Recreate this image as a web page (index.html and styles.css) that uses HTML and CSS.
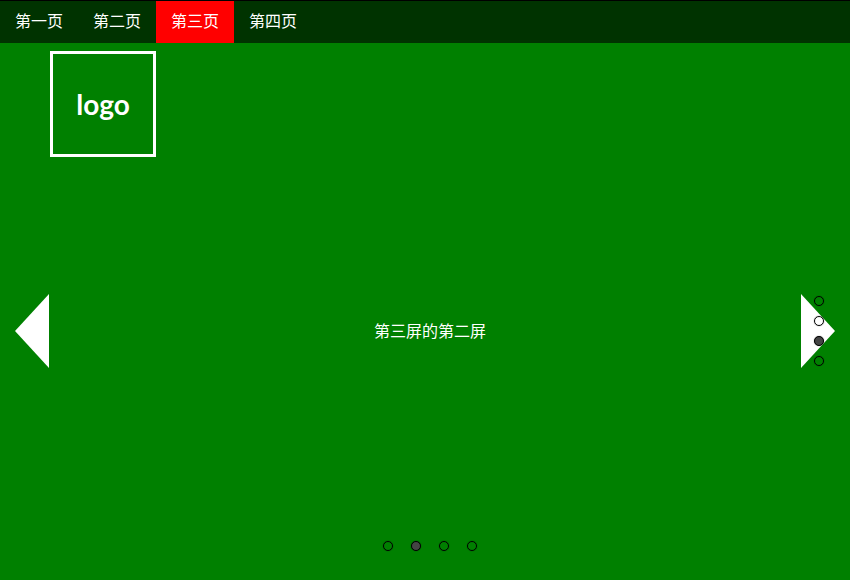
FILE: index.html
```html
<!DOCTYPE html>
<html lang="zh-CN">
<head>
  <meta charset="UTF-8">
  <title>第三屏的第二屏</title>
  <link rel="stylesheet" href="styles.css">
</head>
<body>
  <!-- Top Menu -->
  <ul class="menu">
    <li>第一页</li>
    <li>第二页</li>
    <li class="active">第三页</li>
    <li>第四页</li>
  </ul>

  <!-- Current Slide -->
  <div class="slide">
    <div class="logo">logo</div>
    <p class="slide-text">第三屏的第二屏</p>

    <!-- Slide Arrows -->
    <div class="arrow arrow-prev"></div>
    <div class="arrow arrow-next"></div>

    <!-- Section Dots -->
    <ul class="dots dots-side">
      <li></li>
      <li></li>
      <li class="current"></li>
      <li></li>
    </ul>

    <!-- Slide Dots -->
    <ul class="dots dots-bottom">
      <li></li>
      <li class="current"></li>
      <li></li>
      <li></li>
    </ul>
  </div>
</body>
</html>
```

FILE: styles.css
```css
/* General Reset */
* {
  margin: 0;
  padding: 0;
  box-sizing: border-box;
}

html,
body {
  height: 100%;
  overflow: hidden;
}

body {
  display: flex;
  flex-direction: column;
  background: #008000;
  color: #fff;
  font-family: 'Liberation Sans', 'Noto Sans CJK SC', sans-serif;
  font-size: 16px;
}

ul {
  list-style: none;
}

/* Top Menu */
.menu {
  display: flex;
  height: 43px;
  border-top: 1px solid #000;
  background: #003300;
}

.menu li {
  width: 78px;
  line-height: 42px;
  text-align: center;
  white-space: nowrap;
}

.menu .active {
  background: #f00;
}

/* Slide */
.slide {
  position: relative;
  flex: 1;
  display: flex;
  align-items: center;
  justify-content: center;
  padding: 41px 0 0 10px;
}

.logo {
  position: absolute;
  left: 50px;
  top: 8px;
  width: 106px;
  height: 106px;
  border: 3px solid #fff;
  display: flex;
  align-items: center;
  justify-content: center;
  font-family: 'Lato', sans-serif;
  font-size: 28px;
  font-weight: 700;
}

.slide-text {
  font-size: 16px;
  line-height: 22px;
}

/* Arrows */
.arrow {
  position: absolute;
  top: 251px;
  width: 0;
  height: 0;
  border-style: solid;
  border-width: 37px 0;
  border-color: transparent;
}

.arrow-prev {
  left: 15px;
  border-right: 34px solid #fff;
}

.arrow-next {
  right: 15px;
  border-left: 34px solid #fff;
}

/* Dots */
.dots {
  position: absolute;
  display: flex;
}

.dots li {
  width: 10px;
  height: 10px;
  border: 1px solid #000;
  border-radius: 50%;
  box-shadow: 0 0 1px rgba(0, 0, 0, 0.7);
}

.dots .current {
  background: #444;
}

.dots-side {
  top: 253px;
  right: 26px;
  flex-direction: column;
  gap: 10px;
}

.dots-bottom {
  bottom: 29px;
  left: 383px;
  gap: 18px;
}
```
